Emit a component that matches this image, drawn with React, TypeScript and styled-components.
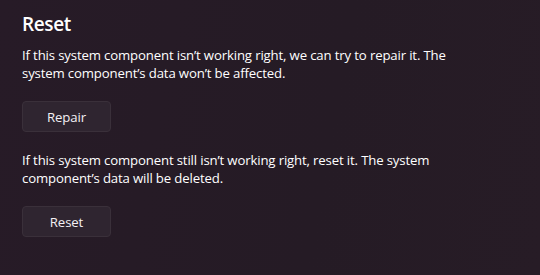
import styled, { createGlobalStyle } from "styled-components";

const GlobalStyle = createGlobalStyle`
  html, body {
    margin: 0;
    padding: 0;
    background: #261b26;
  }
  body {
    font-family: "Open Sans", "Noto Sans", sans-serif;
    color: #ffffff;
  }
`;

const Page = styled.main`
  width: 540px;
  height: 275px;
  box-sizing: border-box;
  padding: 12px 22px 0;
  background: linear-gradient(100deg, #271b27 0%, #251b25 60%, #271c26 100%);
  overflow: hidden;
`;

const Title = styled.h2`
  margin: 0 0 10px;
  font-size: 19px;
  font-weight: 600;
  line-height: 24px;
  letter-spacing: -0.4px;
`;

const Description = styled.p`
  margin: 0;
  max-width: 450px;
  font-size: 13.2px;
  line-height: 18px;
  letter-spacing: -0.15px;
  color: #ffffff;
`;

const Block = styled.section`
  display: flex;
  flex-direction: column;
  align-items: flex-start;
  gap: 19px;
  margin-bottom: 19px;
`;

const Button = styled.button`
  width: 89px;
  height: 31px;
  box-sizing: border-box;
  border-radius: 4px;
  border: 1px solid #3a303a;
  background: #2f2530;
  color: #f4f0f4;
  font-family: inherit;
  font-size: 13.2px;
  letter-spacing: -0.1px;
  cursor: pointer;
`;

export default function App() {
  return (
    <>
      <GlobalStyle />
      <Page>
        <Title>Reset</Title>
        <Block>
          <Description>
            If this system component isn’t working right, we can try to repair
            it. The system component’s data won’t be affected.
          </Description>
          <Button>Repair</Button>
        </Block>
        <Block>
          <Description>
            If this system component still isn’t working right, reset it. The
            system component’s data will be deleted.
          </Description>
          <Button>Reset</Button>
        </Block>
      </Page>
    </>
  );
}
